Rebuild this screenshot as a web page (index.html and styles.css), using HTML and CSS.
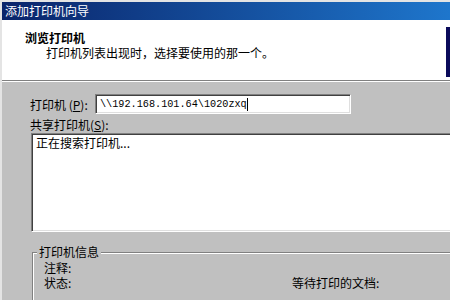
FILE: index.html
```html
<!DOCTYPE html>
<html lang="zh-CN">
<head>
    <meta charset="UTF-8">
    <title>添加打印机向导</title>
    <link rel="stylesheet" href="styles.css">
</head>
<body>
    <div class="window">
        <div class="titlebar">添加打印机向导</div>
        <div class="header">
            <div class="header-text">
                <div class="header-title">浏览打印机</div>
                <div class="header-sub">打印机列表出现时，选择要使用的那一个。</div>
            </div>
            <div class="wizard-icon"></div>
        </div>
        <div class="content">
            <div class="field-row">
                <label class="field-label">打印机 (<u>P</u>):</label>
                <div class="edit">\\192.168.101.64\1020zxq<span class="caret"></span></div>
            </div>
            <div class="list-label">共享打印机(<u>S</u>):</div>
            <div class="listbox">正在搜索打印机...</div>
            <fieldset class="groupbox">
                <legend>打印机信息</legend>
                <div class="info-row">注释:</div>
                <div class="info-row">
                    <span class="info-col">状态:</span>
                    <span>等待打印的文档:</span>
                </div>
            </fieldset>
        </div>
    </div>
</body>
</html>
```

FILE: styles.css
```css
body {
    margin: 0;
    width: 450px;
    height: 300px;
    overflow: hidden;
    background: #c0c0c0;
    font-family: "Noto Sans CJK SC", "Liberation Sans", sans-serif;
    font-size: 12px;
    color: #000;
}

.window {
    width: 448px;
    height: 298px;
    overflow: hidden;
    border-top: 2px solid #e4e4e4;
    border-left: 2px solid #e4e4e4;
}

.titlebar {
    height: 18px;
    line-height: 18px;
    padding-left: 3px;
    color: #fff;
    background: linear-gradient(90deg, #0a246a, #1e76cc);
}

.header {
    display: flex;
    justify-content: space-between;
    align-items: flex-start;
    height: 60px;
    background: #fff;
    border-bottom: 1px solid #808080;
    box-shadow: 0 1px 0 #fff;
}
.header-text {
    padding: 10px 0 0 23px;
    line-height: 15px;
}
.header-title {
    font-weight: bold;
}
.header-sub {
    padding-left: 21px;
}
.wizard-icon {
    flex: none;
    width: 48px;
    height: 50px;
    margin: 7px -44px 0 0;
    background: #0a0a5a;
}

.content {
    padding: 13px 0 0 28px;
}

.field-row {
    display: flex;
    align-items: center;
    height: 20px;
}
.field-label {
    width: 65px;
}

.edit, .listbox {
    box-sizing: border-box;
    background: #fff;
    border: 1px solid;
    border-color: #808080 #fff #fff #808080;
    box-shadow: inset 1px 1px 0 #404040, inset -1px -1px 0 #dfdfdf;
}
.edit {
    display: flex;
    align-items: center;
    width: 256px;
    height: 20px;
    padding-left: 4px;
    font-family: "Liberation Mono", monospace;
    font-size: 10.2px;
}
.caret {
    width: 1px;
    height: 13px;
    background: #000;
}

.list-label {
    margin-top: 4px;
    line-height: 14px;
}
.listbox {
    width: 470px;
    height: 99px;
    margin: 1px 0 0 1px;
    padding: 2px 0 0 4px;
    line-height: 14px;
}

.groupbox {
    width: 470px;
    margin: 13px 0 0 2px;
    padding: 1px 0 20px 4px;
    border: 1px solid #808080;
    box-shadow: inset 1px 1px 0 #fff;
}
.groupbox legend {
    padding: 0 2px;
    line-height: 14px;
    background: #c0c0c0;
}
.info-row {
    display: flex;
    margin-left: 7px;
    line-height: 15px;
}
.info-col {
    width: 248px;
}
```
